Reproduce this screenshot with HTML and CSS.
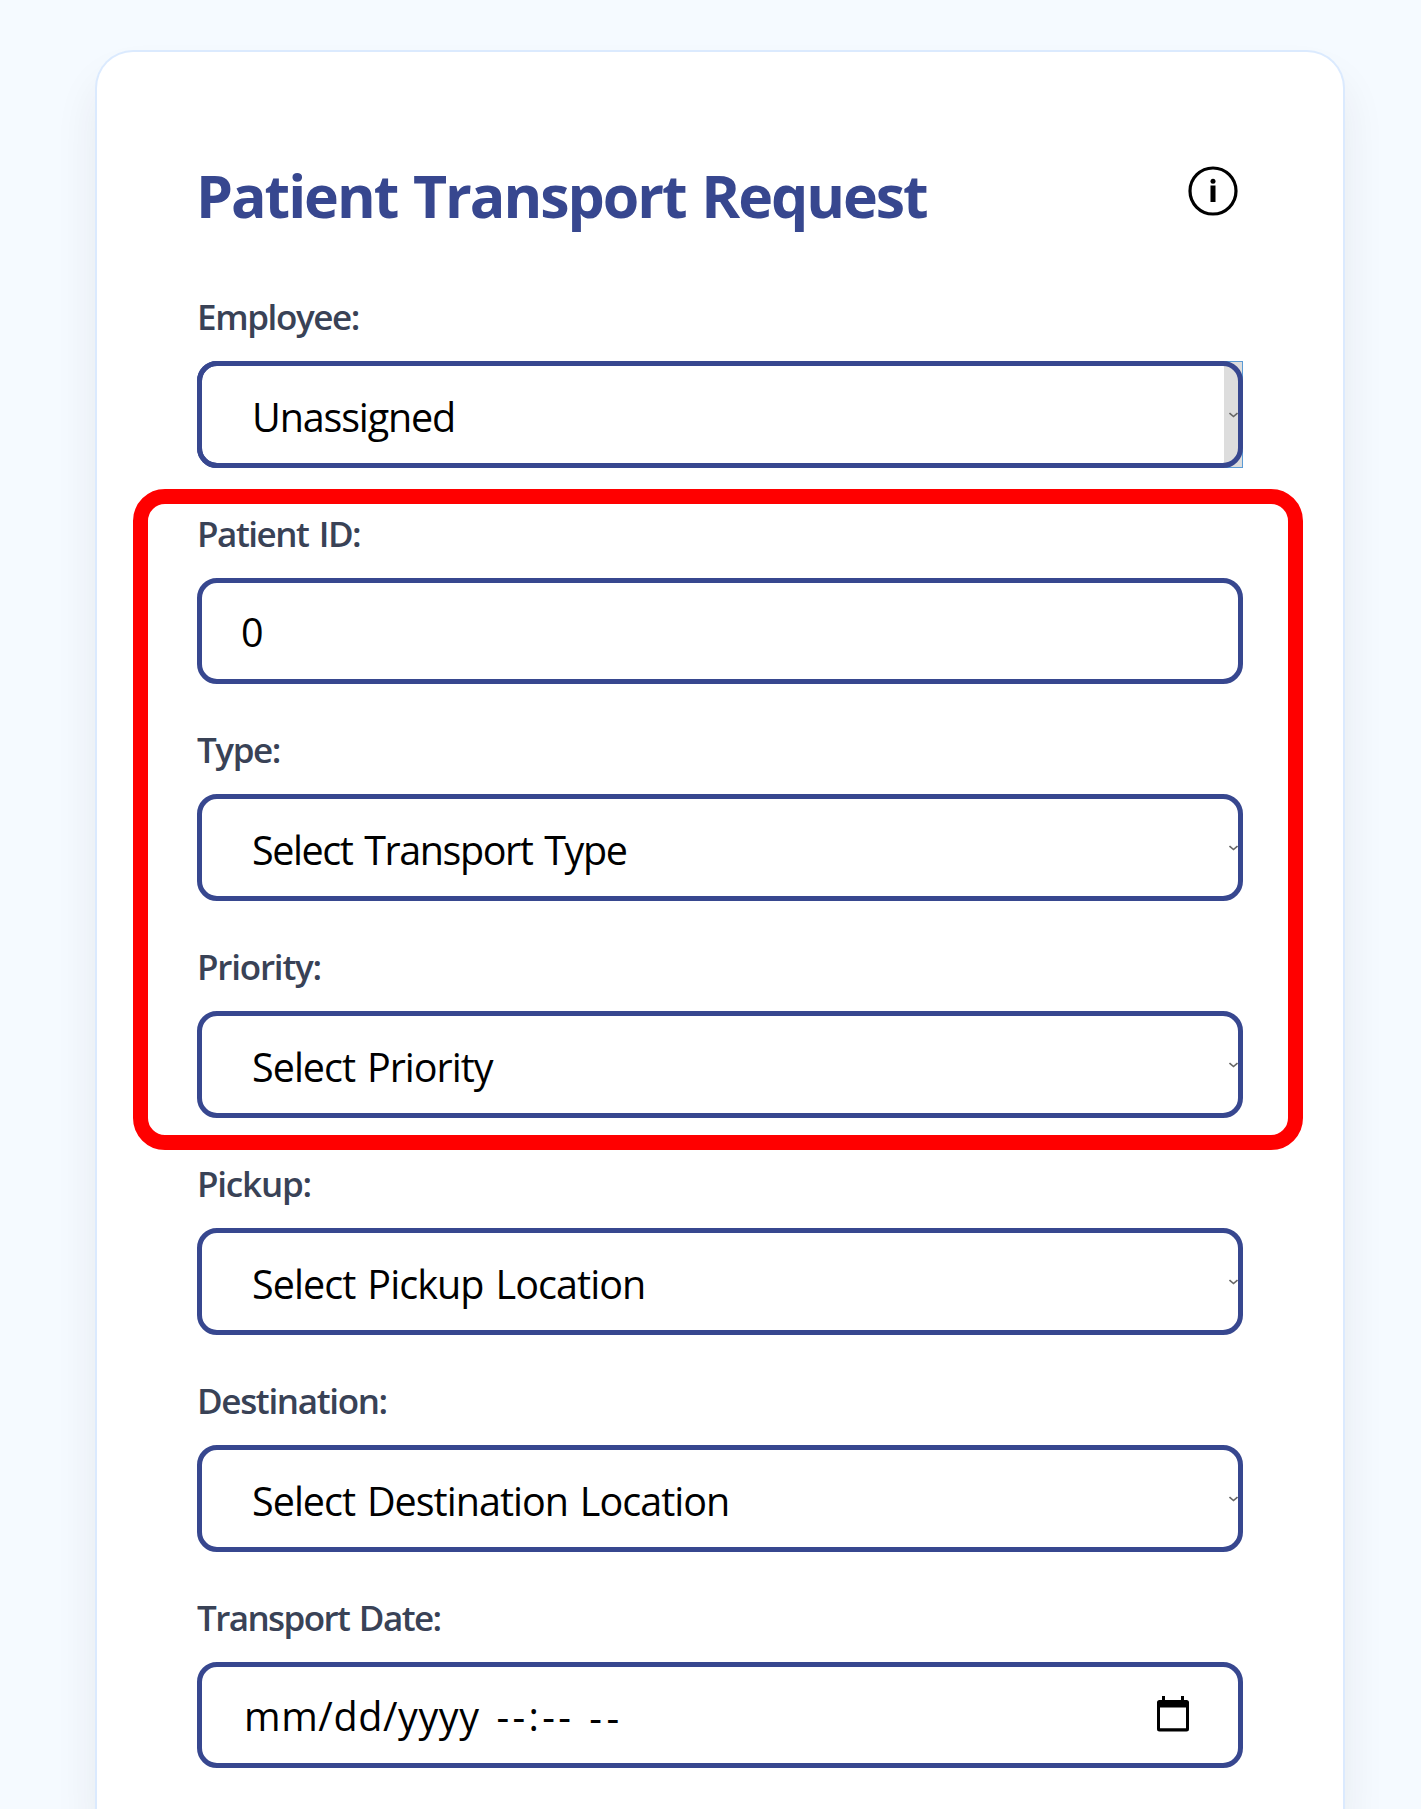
FILE: index.html
```html
<!DOCTYPE html>
<html lang="en">
<head>
<meta charset="utf-8">
<title>Patient Transport Request</title>
<link rel="stylesheet" href="styles.css">
</head>
<body>
<main class="card">
  <header class="card-header">
    <h1 class="title">Patient Transport Request</h1>
    <svg class="info" viewBox="0 0 50 50" role="img" aria-label="Information">
      <circle cx="25" cy="25" r="23" fill="none" stroke="#000" stroke-width="3.2"/>
      <circle cx="25" cy="15.200" r="2.500"/>
      <rect x="22.500" y="19.500" width="5" height="16.500"/>
    </svg>
  </header>

  <section class="field">
    <div class="label employee">Employee:</div>
    <div class="control select active"><span class="value v-employee">Unassigned</span><svg class="chevron" viewBox="0 0 9 6"><path d="M.5 1 4.5 4.5 8.5 1"/></svg></div>
  </section>

  <div class="highlighted">
    <section class="field">
      <div class="label patient">Patient ID:</div>
      <div class="control input"><span class="value">0</span></div>
    </section>
    <section class="field">
      <div class="label type">Type:</div>
      <div class="control select"><span class="value v-type">Select Transport Type</span><svg class="chevron" viewBox="0 0 9 6"><path d="M.5 1 4.5 4.5 8.5 1"/></svg></div>
    </section>
    <section class="field">
      <div class="label priority">Priority:</div>
      <div class="control select"><span class="value v-priority">Select Priority</span><svg class="chevron" viewBox="0 0 9 6"><path d="M.5 1 4.5 4.5 8.5 1"/></svg></div>
    </section>
    <div class="marker"></div>
  </div>

  <section class="field">
    <div class="label pickup">Pickup:</div>
    <div class="control select"><span class="value v-pickup">Select Pickup Location</span><svg class="chevron" viewBox="0 0 9 6"><path d="M.5 1 4.5 4.5 8.5 1"/></svg></div>
  </section>
  <section class="field">
    <div class="label destination">Destination:</div>
    <div class="control select"><span class="value v-destination">Select Destination Location</span><svg class="chevron" viewBox="0 0 9 6"><path d="M.5 1 4.5 4.5 8.5 1"/></svg></div>
  </section>
  <section class="field">
    <div class="label date">Transport Date:</div>
    <div class="control input datetime">
      <span class="value v-date">mm/dd/yyyy</span><span class="value v-time">--:--</span><span class="value v-ampm">--</span>
      <svg class="calendar" viewBox="0 0 32 36"><path fill-rule="evenodd" d="M5 0h3v4h16V0h3v4h2.500q2.500 0 2.500 2.500V33q0 2.500-2.500 2.500h-27Q0 35.500 0 33V6.500Q0 4 2.500 4H5zM3 11.500V32.300H29V11.500z"/></svg>
    </div>
  </section>
</main>
</body>
</html>
```
FILE: styles.css
```css
* { box-sizing: border-box; }

body {
  margin: 0;
  padding: 50px 76px 0 95px;
  background: #f5faff;
  font-family: "Open Sans", "Noto Sans", sans-serif;
  color: #000;
}

.card {
  width: 1250px;
  height: 1759px;
  padding: 100px 100px 0;
  border: 2px solid #dbeafe;
  border-bottom: 0;
  border-radius: 38px 38px 0 0;
  background: #fff;
  box-shadow: 0 29px 43px rgba(50, 35, 50, .08);
}

.card-header {
  display: flex;
  justify-content: space-between;
  align-items: flex-start;
  height: 140px;
  padding-right: 5px;
}

.title {
  margin: 0 0 0 -1px;
  padding-top: 3px;
  font-size: 59px;
  line-height: 80px;
  font-weight: 700;
  color: #37478f;
  white-space: nowrap;
  letter-spacing: -2.05px;
  word-spacing: 2.500px;
}

.info { width: 50px; height: 50px; margin-top: 14px; }

.field { margin-bottom: 41px; }

.label {
  height: 48px;
  margin-bottom: 21px;
  padding-top: 1px;
  font-size: 35px;
  line-height: 48px;
  font-weight: 600;
  color: #394256;
  white-space: nowrap;
}
.employee { letter-spacing: -1.38px; }
.patient { letter-spacing: -1.45px; word-spacing: 2.500px; }
.type { letter-spacing: -1.4px; }
.priority { letter-spacing: -1.2px; }
.pickup { letter-spacing: -1.2px; }
.destination { letter-spacing: -1.33px; }
.date { letter-spacing: -1.58px; word-spacing: 2px; }

.control {
  position: relative;
  display: flex;
  align-items: center;
  height: 107px;
  border: 5px solid #37478f;
  border-radius: 20px;
}

.value {
  padding-top: 2px;
  font-size: 39.500px;
  line-height: 54px;
  white-space: nowrap;
}
.v-employee { letter-spacing: -1.15px; }
.v-type { letter-spacing: -1.43px; word-spacing: 3px; }
.v-priority { letter-spacing: -.98px; word-spacing: 2.500px; }
.v-pickup { letter-spacing: -.92px; word-spacing: 2.500px; }
.v-destination { letter-spacing: -.98px; word-spacing: 2.500px; }

.select { justify-content: space-between; padding-left: 50px; }
.select .value { padding-top: 4px; }
.input { height: 106px; padding-left: 39px; }

.chevron {
  width: 9px;
  height: 6px;
  fill: none;
  stroke: #666;
  stroke-width: 1.6;
}

.active::before {
  content: "";
  position: absolute;
  z-index: -1;
  top: -5px;
  right: -5px;
  bottom: -5px;
  width: 18px;
  border: 1px solid #5b9bd5;
  border-left: 0;
  background: #ddd;
}
.active { z-index: 0; }
.active::after {
  content: "";
  position: absolute;
  z-index: -1;
  inset: -5px;
  border: 5px solid #37478f;
  border-radius: 20px;
}

.highlighted { position: relative; }

.marker {
  position: absolute;
  top: -20px;
  right: -60px;
  bottom: -32px;
  left: -64px;
  border: 15px solid #f00;
  border-radius: 32px;
}

.datetime { padding-left: 42px; padding-right: 49px; }
.v-date { letter-spacing: .6px; }
.v-time { margin-left: 17px; letter-spacing: 3.3px; }
.v-ampm { margin-left: 15px; padding-top: 4px; letter-spacing: 4.500px; }
.calendar { width: 32px; height: 36px; margin-left: auto; margin-top: -3px; }
```
